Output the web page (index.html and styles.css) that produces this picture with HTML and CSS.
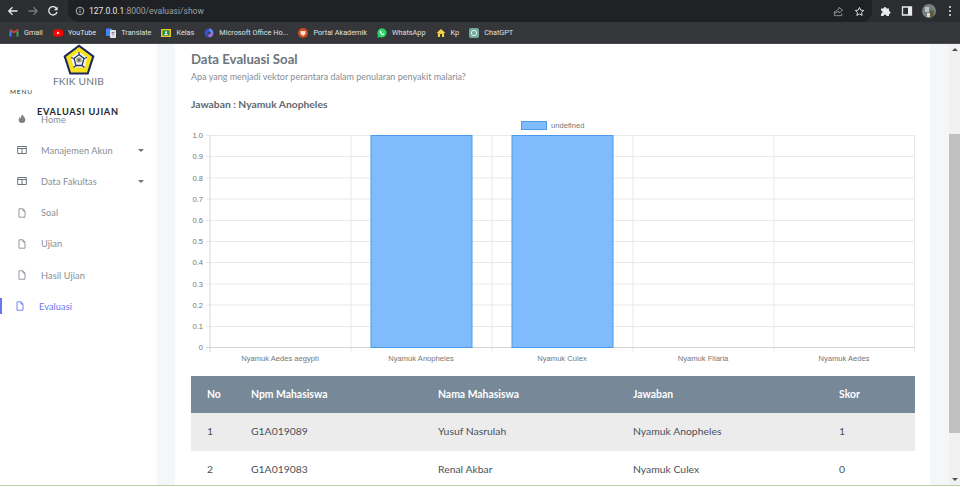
FILE: index.html
```html
<!DOCTYPE html>
<html lang="en">
  <head>
    <meta charset="UTF-8" />
    <title>Evaluasi Ujian</title>
    <link rel="stylesheet" href="styles.css">
  </head>
  <body>
    <div class="toolbar">
      <div class="nav-icons">
        <svg class="nav-icon" viewBox="0 0 12 12"><path d="M10.5 6H2M5.5 2.2 1.8 6l3.7 3.8" fill="none" stroke="#e8eaed" stroke-width="1.3"/></svg>
        <svg class="nav-icon" viewBox="0 0 12 12"><path d="M1.5 6H10M6.5 2.2 10.2 6 6.5 9.8" fill="none" stroke="#77787b" stroke-width="1.3"/></svg>
        <svg class="nav-icon" viewBox="0 0 12 12"><path d="M9.8 4A4.2 4.2 0 1 0 10 7" fill="none" stroke="#e8eaed" stroke-width="1.3"/><path d="M10.6 1.4v3.8H6.8z" fill="#e8eaed"/></svg>
      </div>
      <div class="address">
        <svg class="info-icon" viewBox="0 0 10 10"><circle cx="5" cy="5" r="3.8" fill="none" stroke="#c4c7c5" stroke-width=".9"/><path d="M5 4.4v2.8M5 2.8v.9" stroke="#c4c7c5" stroke-width=".9"/></svg>
        <span class="url">127.0.0.1<span class="url-dim">:8000/evaluasi/show</span></span>
        <span class="address-end">
          <svg class="addr-icon" viewBox="0 0 12 12"><path d="M1.5 5.5v5h8V8M6.5 1.5l4 3-4 3V6C4.5 6 3.5 6.8 2.8 8 3 5 4.5 3.4 6.500 3.2z" fill="none" stroke="#9aa0a6" stroke-width=".9"/></svg>
          <svg class="addr-icon" viewBox="0 0 12 12"><path d="m6 1.5 1.4 3 3.2.4-2.4 2.2.7 3.2L6 8.700l-2.900 1.600.7-3.200-2.400-2.200 3.200-.4z" fill="none" stroke="#e8eaed" stroke-width="1"/></svg>
        </span>
      </div>
      <div class="tool-icons">
        <svg class="tool-icon" viewBox="0 0 12 12"><path d="M1 3.5h2.5a1.5 1.5 0 0 1 3 0H9V6a1.5 1.5 0 0 1 0 3v2H6.500a1.5 1.5 0 0 0-3 0H1V8.500a1.5 1.5 0 0 0 0-3z" fill="#e8eaed"/></svg>
        <svg class="tool-icon" viewBox="0 0 12 12"><path d="M1.5 2h9v8h-9z" fill="none" stroke="#e8eaed" stroke-width="1.3"/><path d="M7 2h3.5v8H7z" fill="#e8eaed"/></svg>
        <svg class="avatar" viewBox="0 0 14 14"><circle cx="7" cy="7" r="7" fill="#77807c"/><path d="M3 3h4v5H3z" fill="#b9c6cf"/><path d="M8 6l4 1-1 6H7z" fill="#5d5a3c"/><path d="M5 9h3v4H5z" fill="#d6d8cf"/></svg>
        <svg class="dots" viewBox="0 0 4 12"><circle cx="2" cy="2" r="1" fill="#e8eaed"/><circle cx="2" cy="6" r="1" fill="#e8eaed"/><circle cx="2" cy="10" r="1" fill="#e8eaed"/></svg>
      </div>
    </div>

    <div class="bookmarks">
      <span class="bookmark"><svg viewBox="0 0 10 10"><path d="M.5 2v6.5h2V4z" fill="#4285f4"/><path d="M7.5 4v4.5h2V2z" fill="#34a853"/><path d="M.5 2 5 5.5 9.5 2 8 1.2 5 3.500 2 1.2z" fill="#ea4335"/></svg>Gmail</span>
      <span class="bookmark"><svg viewBox="0 0 10 10"><rect y="1.5" width="10" height="7" rx="2" fill="#f00"/><path d="M4 3.5 6.8 5 4 6.500z" fill="#fff"/></svg>YouTube</span>
      <span class="bookmark"><svg viewBox="0 0 10 10"><rect y=".5" width="6" height="7.5" rx=".8" fill="#4285f4"/><rect x="4" y="2" width="6" height="8" rx=".8" fill="#dfe3e8"/><path d="M5.5 4.5h3M7 4.5v3" stroke="#5f6368" stroke-width=".7"/></svg>Translate</span>
      <span class="bookmark"><svg viewBox="0 0 10 10"><rect y="1" width="10" height="8" fill="#f6c026"/><rect x="1.5" y="2.3" width="7" height="5.4" fill="#1e8e3e"/><circle cx="5" cy="4.2" r="1" fill="#fff"/><path d="M3.2 7a1.8 1.6 0 0 1 3.600 0z" fill="#fff"/></svg>Kelas</span>
      <span class="bookmark"><svg viewBox="0 0 10 10"><path d="M5 .5a4.5 4.5 0 0 1 4.500 4.500L7 5 5 3z" fill="#4f8ef0"/><path d="M9.5 5A4.5 4.5 0 0 1 5 9.500L3.500 7 7 5z" fill="#9c6ae0"/><path d="M5 9.5A4.5 4.5 0 0 1 5 .5V3L3.500 7z" fill="#3a4fc0"/></svg>Microsoft Office Ho...</span>
      <span class="bookmark"><svg viewBox="0 0 10 10"><circle cx="5" cy="5" r="5" fill="#d2491f"/><path d="M2.5 3h5v3L5 8 2.500 6z" fill="#f7e2d4"/></svg>Portal Akademik</span>
      <span class="bookmark"><svg viewBox="0 0 10 10"><path d="M5 .3a4.6 4.6 0 0 0-4 6.900L.3 9.700l2.600-.7A4.6 4.6 0 1 0 5 .3z" fill="#25d366"/><path d="M3.4 2.8c-.8.6-.7 1.6.1 2.700s1.900 1.900 2.800 1.700c.6-.1 1-.6 1-1.100L6.300 5.400l-.6.6C5 5.700 4.500 5.100 4.200 4.500l.5-.6-.7-1.200z" fill="#fff"/></svg>WhatsApp</span>
      <span class="bookmark"><svg viewBox="0 0 10 10"><path d="M5 1 .5 5h1.400v4h6.200V5h1.400z" fill="#f2d046"/><path d="M4 6h2v3H4z" fill="#3a3a30"/></svg>Kp</span>
      <span class="bookmark"><svg viewBox="0 0 10 10"><rect width="10" height="10" rx="2" fill="#74aa9c"/><circle cx="5" cy="5" r="2.7" fill="none" stroke="#e3efeb" stroke-width="1"/></svg>ChatGPT</span>
    </div>

    <div class="page">
      <aside class="sidebar">
        <div class="brand">
          <svg class="logo" viewBox="0 0 32 32">
            <path d="M16 .5 31.5 12 25.5 30.5H6.5L.5 12z" fill="#1b2a5e"/>
            <path d="M16 3 29 12.7 24 28.5H8L3 12.7z" fill="#f6e21d"/>
            <path d="M16 8 24 13.5 21.5 23.5H10.5L8 13.5z" fill="#f4f5f0"/>
            <path d="M16 10.5 21 14.5 19 21.5H13L11 14.5z" fill="none" stroke="#26356b" stroke-width="1.3"/>
            <path d="M8 13.5 11 14.5M24 13.5 21 14.5M10.5 23.5 13 21.5M21.5 23.5 19 21.5M16 8V10.5" stroke="#26356b" stroke-width="1.2"/>
            <circle cx="16" cy="16" r="2.8" fill="#a9a680"/>
            <circle cx="16" cy="16" r="1.1" fill="#45507a"/>
          </svg>
          <div class="brand-name">FKIK UNIB</div>
        </div>
        <div class="menu-label">MENU</div>
        <div class="app-title">EVALUASI UJIAN</div>
        <nav class="menu">
          <a class="menu-item"><svg class="menu-icon" viewBox="0 0 10 10"><path d="M5.5.5c.4 1.7 2.800 2.800 2.800 5.300a3.300 3.300 0 0 1-6.600 0c0-1.300.7-2.200 1.300-2.800.1.8.4 1.200.9 1.400C3.800 2.900 4.300 1.400 5.500.5z" fill="#7b8289"/></svg>Home</a>
          <a class="menu-item"><svg class="menu-icon" viewBox="0 0 10 10"><path d="M.7 1.5h8.600v7H.7zM.7 3.5h8.600M5 3.500v5" fill="none" stroke="#6c757d" stroke-width="1"/></svg>Manajemen Akun<span class="caret"></span></a>
          <a class="menu-item"><svg class="menu-icon" viewBox="0 0 10 10"><path d="M.7 1.5h8.600v7H.7zM.7 3.5h8.600M5 3.500v5" fill="none" stroke="#6c757d" stroke-width="1"/></svg>Data Fakultas<span class="caret"></span></a>
          <a class="menu-item"><svg class="menu-icon" viewBox="0 0 10 10"><path d="M2 .8h4l2 2.200v6.200H2zM6 .8V3h2" fill="none" stroke="#868e96" stroke-width=".9"/></svg>Soal</a>
          <a class="menu-item"><svg class="menu-icon" viewBox="0 0 10 10"><path d="M2 .8h4l2 2.200v6.200H2zM6 .8V3h2" fill="none" stroke="#868e96" stroke-width=".9"/></svg>Ujian</a>
          <a class="menu-item"><svg class="menu-icon" viewBox="0 0 10 10"><path d="M2 .8h4l2 2.200v6.200H2zM6 .8V3h2" fill="none" stroke="#868e96" stroke-width=".9"/></svg>Hasil Ujian</a>
          <a class="menu-item active"><svg class="menu-icon" viewBox="0 0 10 10"><path d="M2 .8h4l2 2.200v6.200H2zM6 .8V3h2" fill="none" stroke="#6777ef" stroke-width=".9"/></svg>Evaluasi</a>
        </nav>
      </aside>

      <main class="content">
        <section class="card">
          <h2 class="card-title">Data Evaluasi Soal</h2>
          <p class="question">Apa yang menjadi vektor perantara dalam penularan penyakit malaria?</p>
          <h4 class="answer">Jawaban : Nyamuk Anopheles</h4>

          <svg class="chart" viewBox="191 115 724 255">
            <rect x="521.5" y="121.5" width="25" height="8" fill="#80bbfd" stroke="#4d9be8"/>
            <text class="chart-text" x="551" y="128">undefined</text>

            <path class="grid" d="M206 135.5H915M206 156.5H915M206 178H915M206 199H915M206 220.5H915M206 241.5H915M206 262.5H915M206 284H915M206 305H915M206 326.5H915"/>
            <path class="grid" d="M351 135V352M492 135V352M633 135V352M774 135V352M914.5 135V352"/>
            <path class="axis" d="M206 347.5H915M210 135V352"/>

            <rect class="bar" x="371" y="135.5" width="101" height="212"/>
            <rect class="bar" x="512" y="135.5" width="101" height="212"/>

            <g text-anchor="end">
              <text class="chart-text" x="203" y="138">1.0</text>
              <text class="chart-text" x="203" y="159">0.9</text>
              <text class="chart-text" x="203" y="180.5">0.8</text>
              <text class="chart-text" x="203" y="201.5">0.7</text>
              <text class="chart-text" x="203" y="223">0.6</text>
              <text class="chart-text" x="203" y="244">0.5</text>
              <text class="chart-text" x="203" y="265">0.4</text>
              <text class="chart-text" x="203" y="286.5">0.3</text>
              <text class="chart-text" x="203" y="307.5">0.2</text>
              <text class="chart-text" x="203" y="329">0.1</text>
              <text class="chart-text" x="203" y="350">0</text>
            </g>
            <g text-anchor="middle">
              <text class="chart-text" x="280" y="361">Nyamuk Aedes aegypti</text>
              <text class="chart-text" x="421" y="361">Nyamuk Anopheles</text>
              <text class="chart-text" x="562" y="361">Nyamuk Culex</text>
              <text class="chart-text" x="703" y="361">Nyamuk Filaria</text>
              <text class="chart-text" x="844" y="361">Nyamuk Aedes</text>
            </g>
          </svg>

          <table class="result-table">
            <thead>
              <tr>
                <th class="col-no">No</th>
                <th class="col-npm">Npm Mahasiswa</th>
                <th class="col-name">Nama Mahasiswa</th>
                <th class="col-answer">Jawaban</th>
                <th>Skor</th>
              </tr>
            </thead>
            <tbody>
              <tr>
                <td>1</td>
                <td>G1A019089</td>
                <td>Yusuf Nasrulah</td>
                <td>Nyamuk Anopheles</td>
                <td>1</td>
              </tr>
              <tr>
                <td>2</td>
                <td>G1A019083</td>
                <td>Renal Akbar</td>
                <td>Nyamuk Culex</td>
                <td>0</td>
              </tr>
            </tbody>
          </table>
        </section>
      </main>

      <div class="scrollbar">
        <span class="arrow-up"></span>
        <span class="thumb"></span>
        <span class="arrow-down"></span>
      </div>
    </div>
  </body>
</html>
```

FILE: styles.css
```css
* {
  box-sizing: border-box;
}

body {
  margin: 0;
  width: 960px;
  height: 487px;
  overflow: hidden;
  display: flex;
  flex-direction: column;
  font-family: Lato, sans-serif;
  background: #fff;
}

/* browser chrome */
.toolbar {
  height: 22px;
  display: flex;
  align-items: center;
  background: #2c2d30;
}

.nav-icons {
  width: 68px;
  display: flex;
  gap: 8px;
  padding-left: 7px;
}

.nav-icon {
  width: 12px;
  height: 12px;
}

.address {
  width: 804px;
  height: 22px;
  display: flex;
  align-items: center;
  padding: 0 3px 0 7px;
  background: #202124;
  border-radius: 0 0 11px 11px;
}

.info-icon {
  width: 10px;
  height: 10px;
  margin-right: 4px;
}

.url {
  font-family: Roboto, sans-serif;
  font-size: 8.5px;
  color: #e8eaed;
}

.url-dim {
  color: #9aa0a6;
}

.address-end {
  margin-left: auto;
  display: flex;
  gap: 10px;
  padding-right: 4px;
}

.addr-icon {
  width: 11px;
  height: 11px;
}

.tool-icons {
  flex: 1;
  display: flex;
  align-items: center;
  padding-left: 8px;
  gap: 9px;
}

.tool-icon {
  width: 12px;
  height: 12px;
}

.avatar {
  width: 14px;
  height: 14px;
}

.dots {
  width: 4px;
  height: 12px;
  margin-left: 3px;
}

.bookmarks {
  height: 22px;
  display: flex;
  align-items: center;
  gap: 10px;
  padding-left: 9px;
  background: #35363a;
  border-bottom: 1px solid #4a4b4e;
}

.bookmark {
  display: flex;
  align-items: center;
  gap: 5px;
  font-family: Roboto, sans-serif;
  font-size: 7.3px;
  color: #dfe1e5;
  white-space: nowrap;
}

.bookmark svg {
  width: 10px;
  height: 10px;
}

/* page */
.page {
  height: 442px;
  display: flex;
  overflow: hidden;
  background: #f4f6f9;
  border-bottom: 1px solid #b9d3a8;
}

.sidebar {
  width: 157px;
  flex-shrink: 0;
  background: #fff;
}

.brand {
  text-align: center;
}

.logo {
  display: block;
  width: 32px;
  height: 32px;
  margin: 0 auto;
}

.brand-name {
  font-size: 10.2px;
  line-height: 12px;
  margin-top: -1px;
  letter-spacing: .2px;
  color: #6c757d;
}

.menu-label {
  margin: -1px 0 0 10px;
  font-size: 6.5px;
  line-height: 11px;
  letter-spacing: .8px;
  color: #343a40;
}

/* the title runs over the first menu row, as in the original page */
.app-title {
  margin: 9px 0 -14.5px 37px;
  font-size: 9.2px;
  line-height: 12px;
  font-weight: 700;
  letter-spacing: .7px;
  color: #23282d;
}

.menu-item {
  height: 31.2px;
  display: flex;
  align-items: center;
  padding-left: 17px;
  font-size: 9.2px;
  letter-spacing: .1px;
  color: #868e96;
}

.menu-icon {
  width: 10px;
  height: 10px;
  margin-right: 14px;
  flex-shrink: 0;
}

.caret {
  margin: 0 13px 0 auto;
  border-top: 3px solid #6c757d;
  border-left: 3px solid transparent;
  border-right: 3px solid transparent;
}

.menu-item.active {
  padding-left: 15px;
  color: #6777ef;
  background: linear-gradient(#6777ef, #6777ef) no-repeat 0 center / 2px 16px;
}

.content {
  flex: 1;
  padding-left: 18px;
}

.card {
  width: 755px;
  height: 100%;
  padding: 6px 15px 0 16px;
  background: #fff;
}

.card-title {
  margin: 0;
  font-size: 13.2px;
  line-height: 18px;
  font-weight: 700;
  color: #6c757d;
}

.question {
  margin: 0;
  font-size: 9px;
  line-height: 18px;
  color: #868e96;
}

.answer {
  margin: 9px 0 0;
  font-size: 10.3px;
  line-height: 18px;
  font-weight: 700;
  color: #5f6871;
}

.chart {
  display: block;
  width: 724px;
  height: 255px;
  margin-top: 2px;
}

.chart-text {
  font-family: "Liberation Sans", sans-serif;
  font-size: 7.6px;
  fill: #767676;
}

.grid {
  fill: none;
  stroke: #e9e9e9;
}

.axis {
  fill: none;
  stroke: #d6d6d6;
}

.bar {
  fill: #80bbfd;
  stroke: #4d9be8;
}

.result-table {
  width: 724px;
  margin-top: 6px;
  border-collapse: collapse;
  table-layout: fixed;
  font-size: 10.4px;
}

.result-table th,
.result-table td {
  padding: 0 0 2px 16px;
  text-align: left;
}

.result-table th {
  height: 37px;
  font-weight: 700;
  color: #fff;
  background: #778899;
}

.result-table td {
  height: 38px;
  color: #495057;
}

.result-table tbody tr:nth-child(odd) {
  background: #ececec;
}

.col-no {
  width: 44px;
}

.col-npm {
  width: 187px;
}

.col-name {
  width: 195px;
}

.col-answer {
  width: 206px;
}

.scrollbar {
  width: 11px;
  flex-shrink: 0;
  margin-left: auto;
  display: flex;
  flex-direction: column;
  align-items: center;
  background: #f1f1f1;
}

.arrow-up {
  margin-top: 4px;
  border-bottom: 3px solid #505050;
  border-left: 3px solid transparent;
  border-right: 3px solid transparent;
}

.thumb {
  width: 100%;
  height: 299px;
  margin-top: 83px;
  background: #c1c1c1;
}

.arrow-down {
  margin-top: auto;
  margin-bottom: 4px;
  border-top: 3px solid #505050;
  border-left: 3px solid transparent;
  border-right: 3px solid transparent;
}
```
